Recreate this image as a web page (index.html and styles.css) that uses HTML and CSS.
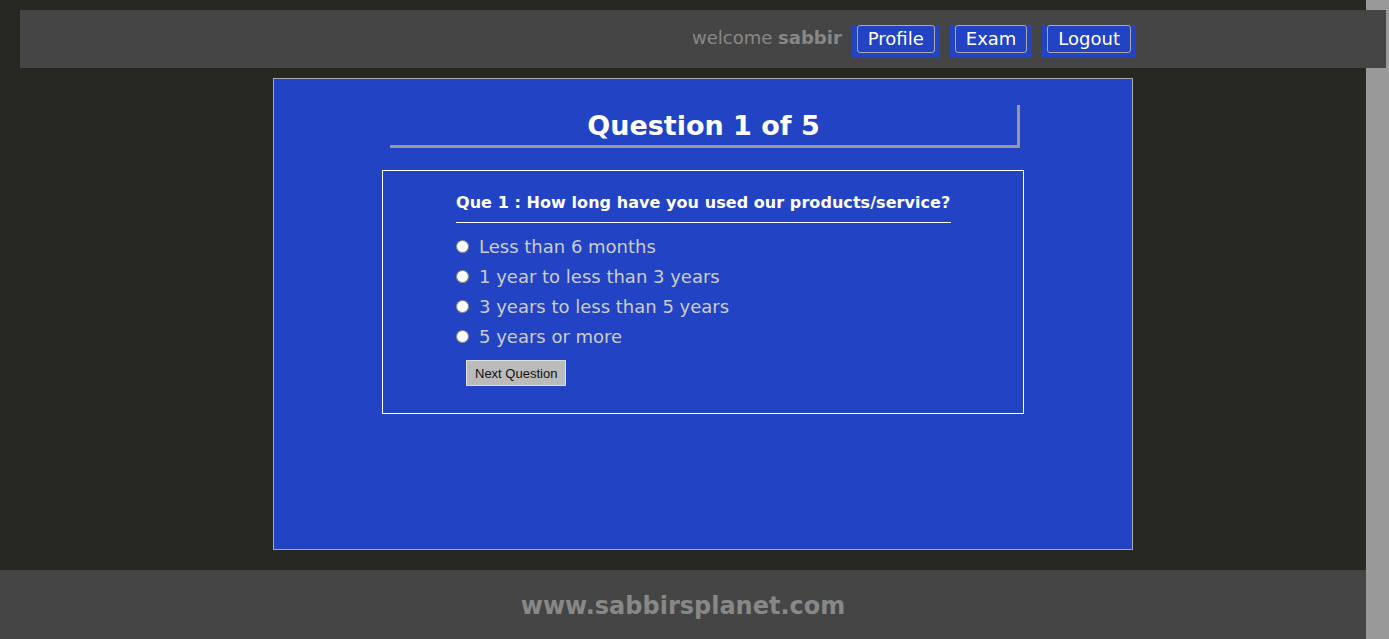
FILE: index.html
```html
<!DOCTYPE html>
<html>
<head>
<meta charset="utf-8">
<title>Quiz</title>
<link rel="stylesheet" href="styles.css">
</head>
<body>
<div class="page">
  <header class="topbar">
    <span class="welcome">welcome <b>sabbir</b></span>
    <nav class="menu">
      <span class="menu-item"><a class="menu-link" href="#">Profile</a></span>
      <span class="menu-item"><a class="menu-link" href="#">Exam</a></span>
      <span class="menu-item"><a class="menu-link" href="#">Logout</a></span>
    </nav>
  </header>
  <main class="panel">
    <h1 class="title">Question 1 of 5</h1>
    <form class="qbox">
      <div class="qinner">
        <h2 class="question">Que 1 : How long have you used our products/service?</h2>
        <label class="opt"><input type="radio" name="q1"><span>Less than 6 months</span></label>
        <label class="opt"><input type="radio" name="q1"><span>1 year to less than 3 years</span></label>
        <label class="opt"><input type="radio" name="q1"><span>3 years to less than 5 years</span></label>
        <label class="opt"><input type="radio" name="q1"><span>5 years or more</span></label>
        <button type="button" class="next">Next Question</button>
      </div>
    </form>
  </main>
  <footer class="footer">www.sabbirsplanet.com</footer>
</div>
</body>
</html>
```

FILE: styles.css
```css
html, body {
  margin: 0;
  padding: 0;
}
body {
  background: #999999;
  overflow: hidden;
  height: 639px;
}
.page {
  width: 1366px;
  height: 639px;
  background: #282823;
  padding-top: 10px;
  box-sizing: border-box;
  display: flex;
  flex-direction: column;
}
.topbar {
  margin-left: 20px;
  width: 1366px;
  height: 58px;
  background: #454545;
  display: flex;
  justify-content: flex-end;
  align-items: flex-start;
  padding: 15px 250px 0 0;
  box-sizing: border-box;
  font-family: "DejaVu Sans", Verdana, sans-serif;
}
.welcome {
  color: #888888;
  font-size: 18px;
  line-height: 26px;
  margin-right: 10px;
}
.welcome b { font-weight: bold; }
.menu {
  display: flex;
  gap: 10px;
}
.menu-item {
  background: #2243c4;
  padding: 0 5px 5px 5px;
  display: block;
}
.menu-link {
  display: block;
  border: 1px solid #aaaaaa;
  border-radius: 3px;
  color: #ffffff;
  text-decoration: none;
  font-size: 18px;
  line-height: 26px;
  padding: 0 10px;
}
.panel {
  margin: 10px 0 0 273px;
  width: 860px;
  height: 472px;
  box-sizing: border-box;
  background: #2243c4;
  border: 1px solid #aaaaaa;
  padding-top: 26px;
}
.title {
  margin: 0 0 0 116px;
  width: 630px;
  height: 43px;
  box-sizing: border-box;
  border-right: 3px solid #999999;
  border-bottom: 3px solid #999999;
  color: #ffffff;
  font-family: "DejaVu Sans", Tahoma, sans-serif;
  font-size: 27px;
  font-weight: bold;
  text-align: center;
  line-height: 42px;
}
.qbox {
  margin: 22px 0 0 108px;
  width: 642px;
  height: 244px;
  box-sizing: border-box;
  border: 1px solid #ffffff;
  padding: 21px 0 0 73px;
}
.qinner {
  display: flex;
  flex-direction: column;
  align-items: flex-start;
  width: 495px;
}
.question {
  margin: 0;
  align-self: stretch;
  color: #ffffff;
  font-family: "DejaVu Sans", Verdana, sans-serif;
  font-size: 16px;
  font-weight: bold;
  letter-spacing: 0.06px;
  line-height: 22px;
  padding-bottom: 8px;
  border-bottom: 1px solid #ffffff;
  margin-bottom: 8px;
}
.opt {
  display: flex;
  align-items: center;
  height: 30px;
  color: #cccccc;
  font-family: "DejaVu Sans", Verdana, sans-serif;
  font-size: 18px;
}
.opt input {
  margin: 0 10px 0 0;
  width: 13px;
  height: 13px;
}
.next {
  margin: 9px 0 0 10px;
  height: 26px;
  padding: 0 8px;
  background: #bbbbbb;
  border: 1px solid #dddddd;
  color: #111111;
  font-family: "Liberation Sans", Arial, sans-serif;
  font-size: 13px;
}
.footer {
  margin-top: auto;
  height: 69px;
  background: #454545;
  color: #888888;
  font-family: "DejaVu Sans", Verdana, sans-serif;
  font-size: 24px;
  font-weight: bold;
  text-align: center;
  line-height: 72px;
}
```
